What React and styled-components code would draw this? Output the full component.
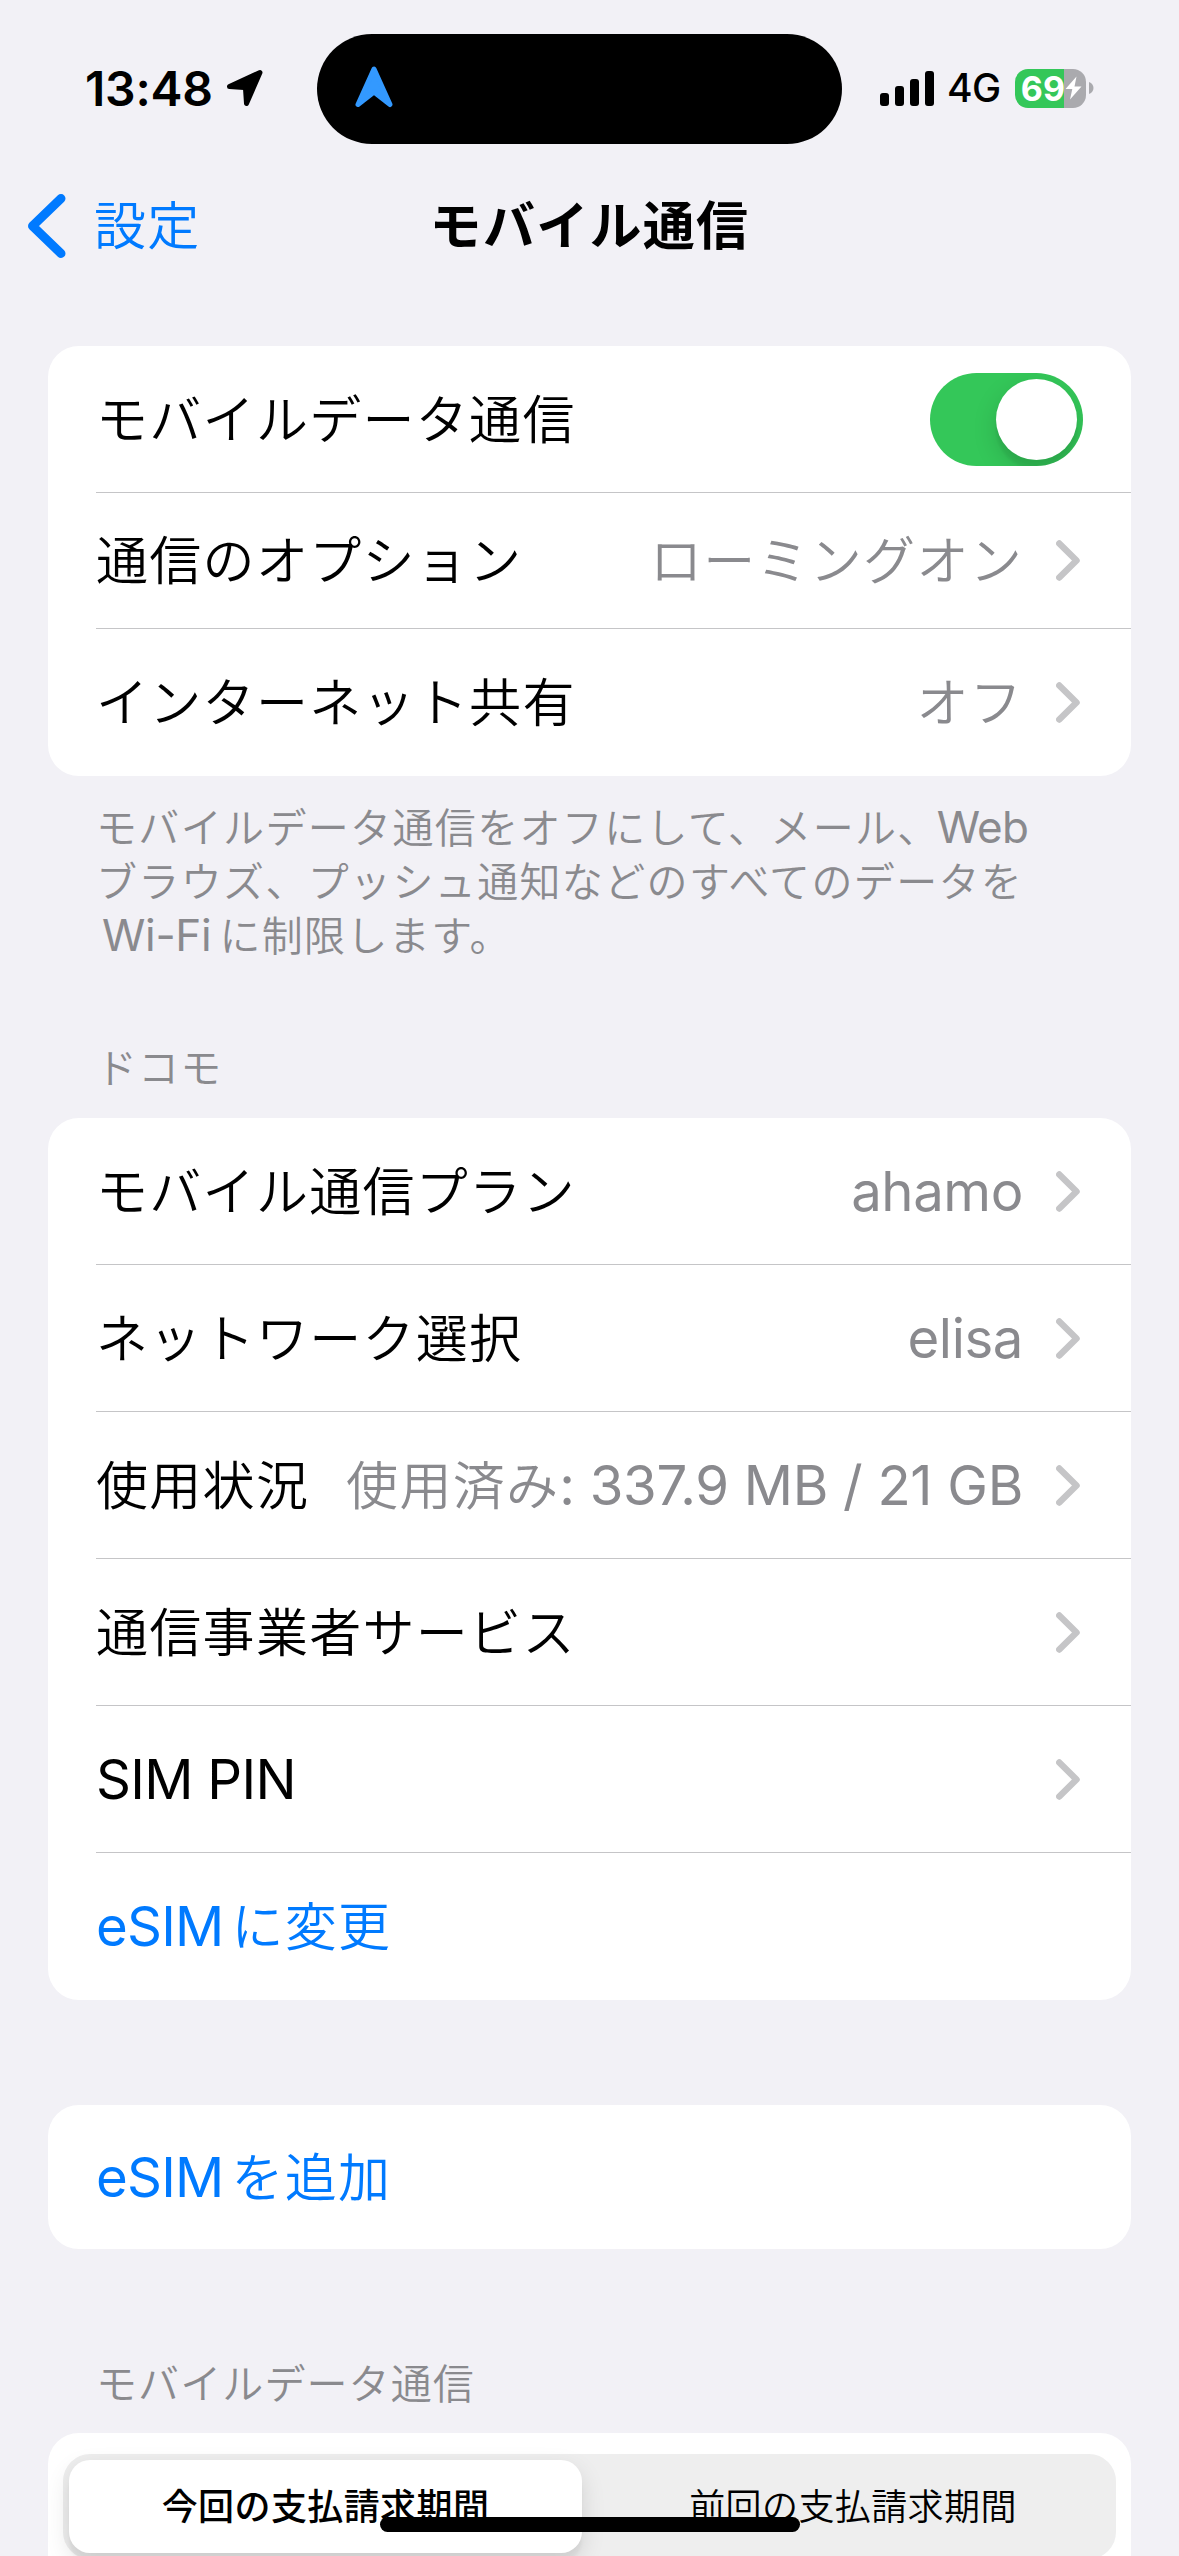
import React from 'react';
import {useState} from 'react';
import styled, { createGlobalStyle } from 'styled-components';

const GlobalStyle = createGlobalStyle`
  * {
    box-sizing: border-box;
  }
  html, body {
    margin: 0;
    padding: 0;
    background-color: #f2f1f6;
  }
`;

const Screen = styled.div`
  position: relative;
  width: 1179px;
  height: 2556px;
  overflow: hidden;
  background-color: #f2f1f6;
  color: #000;
  font-family: "Noto Sans CJK JP", sans-serif;
  font-weight: 350;
  white-space: nowrap;
`;

const StatusBar = styled.header`
  display: grid;
  grid-template-columns: 317px 525px 1fr;
  align-items: center;
  height: 178px;
  font-family: Inter, sans-serif;
`;

const Clock = styled.div`
  display: flex;
  align-items: center;
  gap: 13px;
  padding-left: 85px;
  font-size: 48px;
  font-weight: 600;
  letter-spacing: -0.2px;
  line-height: 58px;
  svg {
    margin-top: -2px;
  }
`;

const Island = styled.div`
  display: flex;
  align-items: center;
  height: 110px;
  padding-left: 38px;
  padding-bottom: 4px;
  border-radius: 55px;
  background-color: #000;
`;

const Indicators = styled.div`
  display: flex;
  align-items: center;
  padding-left: 38px;
  padding-bottom: 2px;
`;

const Carrier = styled.span`
  width: 67px;
  padding-left: 13px;
  font-size: 39px;
  font-weight: 450;
  letter-spacing: -0.5px;
  line-height: 48px;
`;

const Battery = styled.div`
  display: flex;
  align-items: center;
  justify-content: flex-end;
  width: 71px;
  height: 39px;
  margin: 0 3px 0 14px;
  padding-right: 4px;
  border-radius: 13px;
  background: linear-gradient(to right, #34c759 49px, #aaaaae 49px);
  color: #fff;
  font-size: 34px;
  font-weight: 700;
  line-height: 39px;
`;

const NavBar = styled.nav`
  display: grid;
  grid-template-columns: 1fr auto 1fr;
  align-items: center;
  height: 96px;
  padding-left: 28px;
  margin-bottom: 72px;
  font-size: 52px;
  letter-spacing: 1.3px;
  line-height: 90px;
`;

const BackButton = styled.div`
  display: flex;
  align-items: center;
  gap: 28px;
  color: #007aff;
  span {
    padding-bottom: 6px;
  }
`;

const Title = styled.h1`
  margin: 0 28px 0 0;
  padding-bottom: 6px;
  font-size: 52px;
  font-weight: 700;
`;

const Card = styled.section`
  display: flex;
  flex-direction: column;
  margin: 0 48px;
  padding-left: 48px;
  border-radius: 31px;
  background-color: #fff;
`;

const RowBox = styled.div`
  display: flex;
  align-items: center;
  justify-content: space-between;
  height: ${(props) => props.$height || 147}px;
  padding-right: 48px;
  border-bottom: 1px solid #c5c5c7;
  color: ${(props) => (props.$link ? '#007aff' : '#000')};
  font-size: 52px;
  letter-spacing: 1.3px;
  line-height: 80px;
  &:last-child {
    border-bottom: none;
  }
`;

const Label = styled.span`
  padding-bottom: 5px;
`;

const Value = styled.span`
  display: flex;
  align-items: center;
  color: #8a8a8e;
  svg {
    margin-left: 33px;
    margin-right: 3px;
  }
`;

const Latin = styled.span`
  margin: ${(props) => props.$margin || 0};
  font-family: Inter, sans-serif;
  font-size: ${(props) => (props.$small ? 44 : 54.5)}px;
  font-weight: 400;
  letter-spacing: ${(props) => props.$track || -0.8}px;
  line-height: 0;
  white-space: pre;
`;

const Toggle = styled.button`
  display: flex;
  justify-content: ${(props) => (props.$on ? 'flex-end' : 'flex-start')};
  width: 153px;
  height: 93px;
  padding: 6px;
  border: none;
  border-radius: 47px;
  overflow: hidden;
  background-color: ${(props) => (props.$on ? '#34c759' : '#e9e9ea')};
  span {
    width: 81px;
    height: 81px;
    border-radius: 50%;
    background-color: #fff;
    box-shadow: 0 9px 24px rgba(0, 0, 0, 0.15), 0 9px 3px rgba(0, 0, 0, 0.06);
  }
`;

const Note = styled.p`
  margin: 22px 96px 0 96px;
  height: 165px;
  color: #8a8a8e;
  font-size: 41px;
  letter-spacing: 1.35px;
  line-height: 54px;
`;

const GroupTitle = styled.h2`
  margin: ${(props) => props.$top}px 96px 0;
  height: ${(props) => props.$height}px;
  color: #8a8a8e;
  font-size: 41px;
  font-weight: 350;
  letter-spacing: 1.1px;
  line-height: 54px;
`;

const UsageCard = styled(Card)`
  height: 200px;
  padding: 21px 15px;
`;

const Segmented = styled.div`
  display: grid;
  grid-template-columns: 513px 1fr;
  gap: 14px;
  height: 105px;
  padding: 6px;
  border-radius: 27px;
  background-color: #eee;
`;

const Segment = styled.div`
  height: 93px;
  border-radius: 21px;
  background-color: ${(props) => (props.$active ? '#fff' : 'transparent')};
  box-shadow: ${(props) => (props.$active ? '0 9px 24px rgba(0, 0, 0, 0.12), 0 9px 3px rgba(0, 0, 0, 0.04)' : 'none')};
  font-size: 36px;
  font-weight: ${(props) => (props.$active ? 500 : 350)};
  letter-spacing: 0.4px;
  line-height: 89px;
  text-align: center;
`;

const HomeIndicator = styled.div`
  position: absolute;
  left: 380px;
  bottom: 24px;
  width: 420px;
  height: 15px;
  border-radius: 8px;
  background-color: #000;
`;

const LocationIcon = () => (
  <svg width="38" height="38" viewBox="0 0 38 38">
    <path d="M3.500 17.500 L34 3.500 L20.500 34.500 L19.500 19.500 Q19.500 18.500 18 18.500 Z" fill="#000" stroke="#000" strokeWidth="5" strokeLinejoin="round" />
  </svg>
);

const NavigationIcon = () => (
  <svg width="38" height="42" viewBox="0 0 38 42">
    <path d="M19 3 L3 38.500 L19 26 L35 38.500 Z" fill="#3399ff" stroke="#3399ff" strokeWidth="5" strokeLinejoin="round" />
  </svg>
);

const SignalIcon = () => (
  <svg width="54" height="35" viewBox="0 0 54 35">
    <rect x="0" y="22" width="9" height="13" rx="3" />
    <rect x="15" y="15" width="9" height="20" rx="3" />
    <rect x="30" y="8" width="9" height="27" rx="3" />
    <rect x="45" y="0" width="9" height="35" rx="3" />
  </svg>
);

const BoltIcon = () => (
  <svg width="17" height="24" viewBox="0 0 17 24">
    <path d="M11.500 0.500 L0.500 13 H7.300 L5 23.500 L16.500 10.500 H9.500 Z" fill="#fff" />
  </svg>
);

const BatteryCap = () => (
  <svg width="5" height="12" viewBox="0 0 5 12">
    <path d="M0 0 C6 2 6 10 0 12 Z" fill="#aaaaae" />
  </svg>
);

const BackIcon = () => (
  <svg width="38" height="64" viewBox="0 0 38 64">
    <path d="M33 4.500 L4.500 32 L33 59.500" fill="none" stroke="#007aff" strokeWidth="9" strokeLinecap="round" strokeLinejoin="round" />
  </svg>
);

const Chevron = () => (
  <svg width="24" height="41" viewBox="0 0 24 41">
    <path d="M3.300 3.500 L20.500 20.500 L3.300 37.500" fill="none" stroke="#c5c5c7" strokeWidth="6.500" strokeLinecap="round" strokeLinejoin="round" />
  </svg>
);

const Row = ({ label, value, height, children }) => (
  <RowBox $height={height}>
    <Label>{label}</Label>
    {children || (
      <Value>
        <Label>{value}</Label>
        <Chevron />
      </Value>
    )}
  </RowBox>
);

const App = () => {
  const [dataOn, setDataOn] = useState(true);
  const [period, setPeriod] = useState(0);

  return (
    <Screen>
      <GlobalStyle />
      <StatusBar>
        <Clock>
          13:48
          <LocationIcon />
        </Clock>
        <Island>
          <NavigationIcon />
        </Island>
        <Indicators>
          <SignalIcon />
          <Carrier>4G</Carrier>
          <Battery>
            69
            <BoltIcon />
          </Battery>
          <BatteryCap />
        </Indicators>
      </StatusBar>

      <NavBar>
        <BackButton>
          <BackIcon />
          <span>設定</span>
        </BackButton>
        <Title>モバイル通信</Title>
      </NavBar>

      <Card>
        <Row label="モバイルデータ通信">
          <Toggle $on={dataOn} onClick={() => setDataOn(!dataOn)}>
            <span />
          </Toggle>
        </Row>
        <Row label="通信のオプション" value="ローミングオン" height={136} />
        <Row label="インターネット共有" value="オフ" />
      </Card>
      <Note>
        モバイルデータ通信をオフにして、メール、<Latin $small $margin="0 0 0 -3px">Web</Latin>
        <br />
        ブラウズ、プッシュ通知などのすべてのデータを
        <br />
        <Latin $small $track={-0.3} $margin="0 8px 0 6px">Wi-Fi</Latin>に制限します。
      </Note>

      <GroupTitle $top={75} $height={80}>ドコモ</GroupTitle>
      <Card>
        <Row label="モバイル通信プラン" value={<Latin $track={-0.4}>ahamo</Latin>} />
        <Row label="ネットワーク選択" value={<Latin $track={-0.4}>elisa</Latin>} />
        <Row label="使用状況" value={<>使用済み<Latin $track={-0.3}>: 337.9 MB / 21 GB</Latin></>} />
        <Row label="通信事業者サービス" />
        <Row label={<Latin $track={-0.7}>SIM PIN</Latin>} />
        <RowBox $link>
          <Label><Latin $margin="0 8px 0 0">eSIM</Latin>に変更</Label>
        </RowBox>
      </Card>

      <GroupTitle as="div" $top={0} $height={105} />
      <Card>
        <RowBox $link $height={144}>
          <Label><Latin $margin="0 8px 0 0">eSIM</Latin>を追加</Label>
        </RowBox>
      </Card>

      <GroupTitle $top={105} $height={79}>モバイルデータ通信</GroupTitle>
      <UsageCard>
        <Segmented>
          <Segment $active={period === 0} onClick={() => setPeriod(0)}>今回の支払請求期間</Segment>
          <Segment $active={period === 1} onClick={() => setPeriod(1)}>前回の支払請求期間</Segment>
        </Segmented>
      </UsageCard>
      <HomeIndicator />
    </Screen>
  );
};

export default App;
